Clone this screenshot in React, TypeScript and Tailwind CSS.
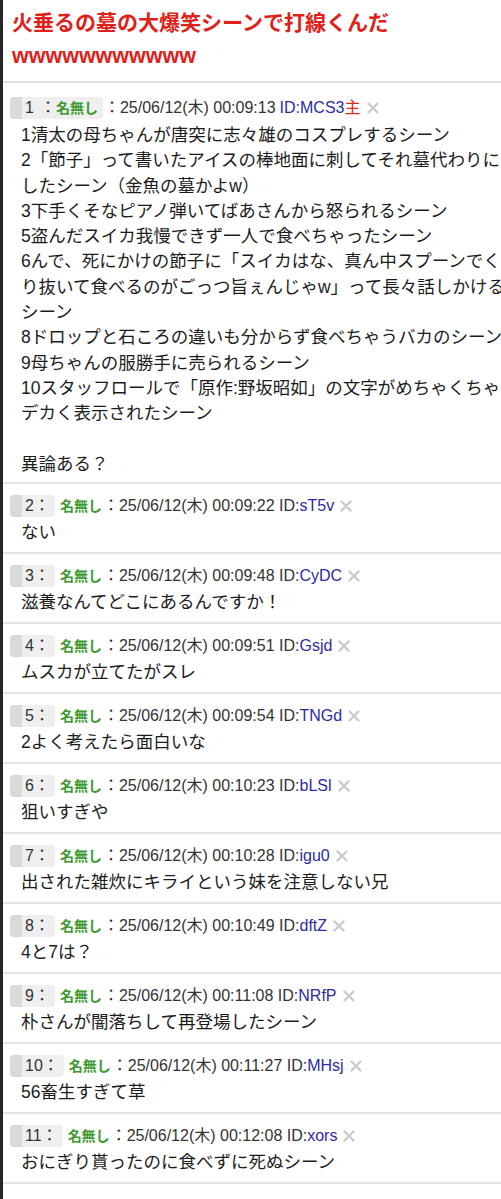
const FONT = '"Liberation Sans", "Noto Sans CJK JP", sans-serif';

const firstBody = [
  '1清太の母ちゃんが唐突に志々雄のコスプレするシーン',
  '2「節子」って書いたアイスの棒地面に刺してそれ墓代わりに',
  'したシーン（金魚の墓かよw）',
  '3下手くそなピアノ弾いてばあさんから怒られるシーン',
  '5盗んだスイカ我慢できず一人で食べちゃったシーン',
  '6んで、死にかけの節子に「スイカはな、真ん中スプーンでく',
  'り抜いて食べるのがごっつ旨ぇんじゃw」って長々話しかける',
  'シーン',
  '8ドロップと石ころの違いも分からず食べちゃうバカのシーン',
  '9母ちゃんの服勝手に売られるシーン',
  '10スタッフロールで「原作:野坂昭如」の文字がめちゃくちゃ',
  'デカく表示されたシーン',
  '',
  '異論ある？',
];

const replies = [
  { no: 2, time: '00:09:22', id: 'sT5v', body: 'ない' },
  { no: 3, time: '00:09:48', id: 'CyDC', body: '滋養なんてどこにあるんですか！' },
  { no: 4, time: '00:09:51', id: 'Gsjd', body: 'ムスカが立てたがスレ' },
  { no: 5, time: '00:09:54', id: 'TNGd', body: '2よく考えたら面白いな' },
  { no: 6, time: '00:10:23', id: 'bLSl', body: '狙いすぎや' },
  { no: 7, time: '00:10:28', id: 'igu0', body: '出された雑炊にキライという妹を注意しない兄' },
  { no: 8, time: '00:10:49', id: 'dftZ', body: '4と7は？' },
  { no: 9, time: '00:11:08', id: 'NRfP', body: '朴さんが闇落ちして再登場したシーン' },
  { no: 10, time: '00:11:27', id: 'MHsj', body: '56畜生すぎて草' },
  { no: 11, time: '00:12:08', id: 'xors', body: 'おにぎり貰ったのに食べずに死ぬシーン' },
];

function Cross() {
  return (
    <svg width="12" height="12" viewBox="0 0 12 12" className="ml-[6px] shrink-0">
      <path d="M1.5 1.5 L10.5 10.5 M10.5 1.5 L1.5 10.5" stroke="#cbcbcb" strokeWidth="2.4" strokeLinecap="round" />
    </svg>
  );
}

function Badge({ children }: { children: React.ReactNode }) {
  return (
    <span className="flex h-[22px] items-center rounded-[4px] overflow-hidden bg-[#efefef]">
      <span className="w-[12px] h-full bg-[#dadada]" />
      <span className="flex items-center pl-[3px] pr-[5px]">{children}</span>
    </span>
  );
}

export default function App() {
  return (
    <div className="w-[501px] min-h-[1199px] bg-white overflow-hidden border-l-[3px] border-[#262626] text-[#1c1c1c]" style={{ fontFamily: FONT }}>
      {/* Title */}
      <div className="pl-[9px] pt-[6px] pb-[8px] border-b-2 border-[#e4e4e4]">
        <h1 className="text-[21px] leading-[33px] font-bold text-[#de2119] whitespace-nowrap">
          火垂るの墓の大爆笑シーンで打線くんだ
          <br />
          <span className="text-[21.5px]">wwwwwwwwwww</span>
        </h1>
      </div>

      {/* OP */}
      <div className="pl-[7px] pt-[14px] pb-[5px] border-b-2 border-[#e4e4e4]">
        <div className="flex items-center h-[22px] text-[16px] whitespace-nowrap text-[#333]">
          <Badge>
            <span>1</span>
            <span className="ml-[6px]">：</span>
            <span className="text-[14px] font-bold text-[#3c9a30]">名無し</span>
          </Badge>
          <span className="ml-[1px]">：25/06/12(木) 00:09:13</span>
          <span className="ml-[4px] text-[#2b2ba3]">ID:MCS3</span>
          <span className="text-[#e0281e]">主</span>
          <Cross />
        </div>
        <div className="mt-[4px] pl-[11px] text-[17.5px] leading-[25.3px] whitespace-nowrap">
          {firstBody.map((l, i) => (
            <div key={i} className="h-[25.3px]">{l}</div>
          ))}
        </div>
      </div>

      {/* Replies */}
      {replies.map((r) => (
        <div key={r.no} className="pl-[7px] pt-[11px] pb-[7px] border-b-2 border-[#e4e4e4]">
          <div className="flex items-center h-[22px] text-[16px] whitespace-nowrap text-[#333]">
            <Badge>
              <span>{r.no}：</span>
            </Badge>
            <span className="ml-[5px] text-[14px] font-bold text-[#3c9a30]">名無し</span>
            <span className="ml-[1px]">：25/06/12(木) {r.time} ID:</span>
            <span className="text-[#2b2ba3]">{r.id}</span>
            <Cross />
          </div>
          <div className="mt-[3px] pl-[11px] text-[17.5px] leading-[25px] whitespace-nowrap">
            {r.body}
          </div>
        </div>
      ))}
    </div>
  );
}
